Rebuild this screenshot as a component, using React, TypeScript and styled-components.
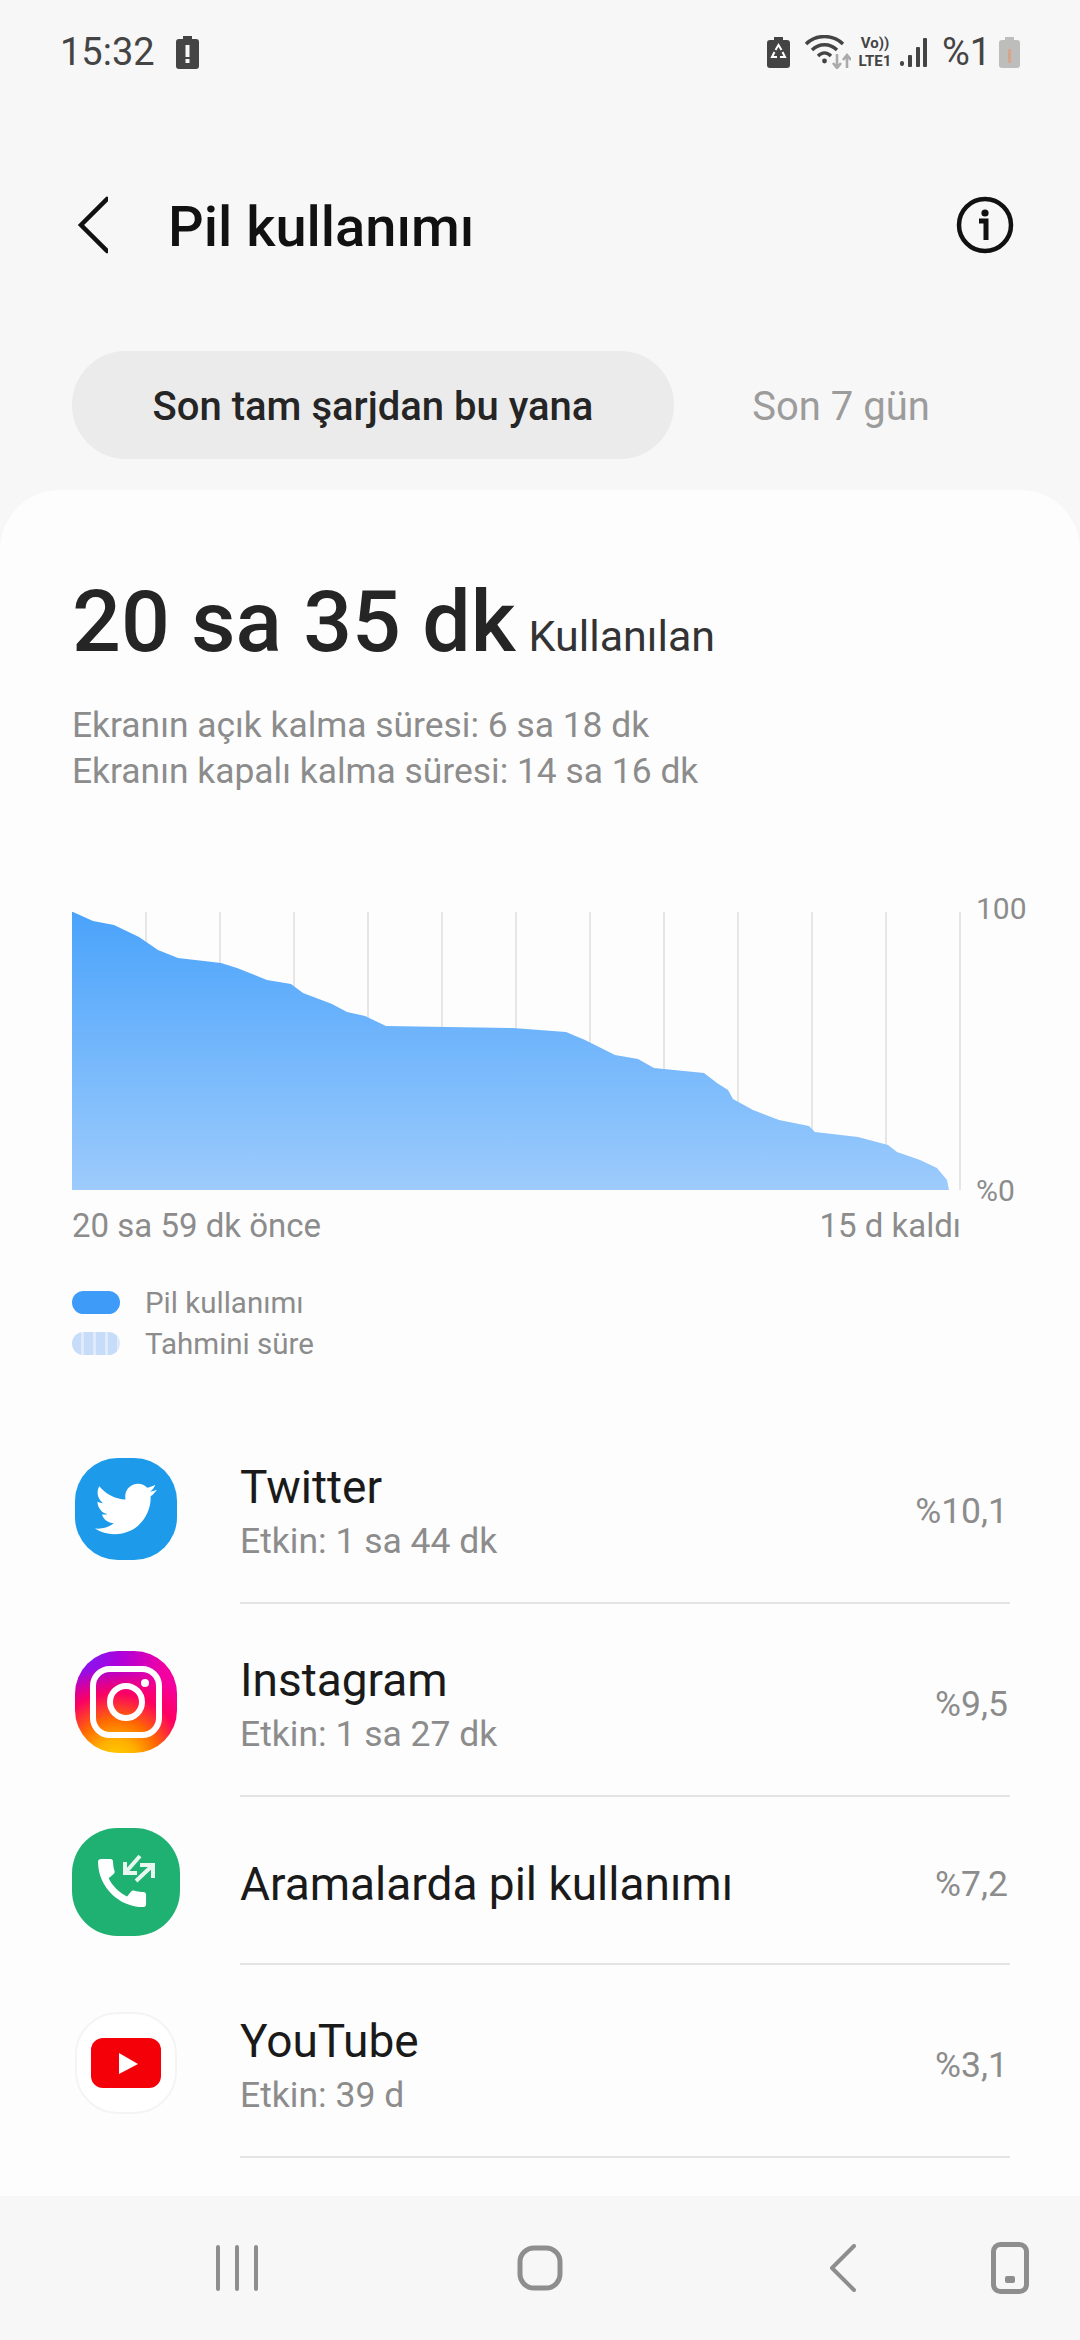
import React from 'react';
import styled, { createGlobalStyle } from 'styled-components';
import { FaTwitter } from 'react-icons/fa';

const GlobalStyle = createGlobalStyle`
	html, body {
		margin: 0;
		padding: 0;
		background: #f7f7f7;
	}
	* {
		box-sizing: border-box;
	}
`;

const curve: [number, number][] = [
	[1, 0], [21, 9], [42, 13], [67, 25], [86, 38], [106, 46], [149, 51], [165, 56], [195, 68],
	[219, 72], [231, 81], [260, 92], [275, 100], [293, 104], [314, 114], [441, 116], [494, 120],
	[513, 128], [543, 143], [566, 147], [582, 156], [632, 161], [645, 171], [656, 178], [661, 187],
	[681, 198], [707, 208], [737, 214], [743, 220], [786, 225], [816, 233], [825, 240], [848, 248],
	[865, 256], [875, 268], [877, 278],
];
const gridLines = [74, 148, 222, 296, 370, 444, 518, 592, 666, 740, 814, 888];
const chartPath = `M0 278 L0 0 ${curve.map(([x, y]) => `L${x} ${y}`).join(' ')} Z`;

const apps = [
	{ name: 'Twitter', active: 'Etkin: 1 sa 44 dk', share: '%10,1', height: 193, icon: <TwitterIcon /> },
	{ name: 'Instagram', active: 'Etkin: 1 sa 27 dk', share: '%9,5', height: 193, icon: <InstagramIcon /> },
	{ name: 'Aramalarda pil kullanımı', share: '%7,2', height: 168, icon: <CallIcon /> },
	{ name: 'YouTube', active: 'Etkin: 39 d', share: '%3,1', height: 193, icon: <YoutubeIcon /> },
];

function TwitterIcon() {
	return (
		<TwitterTile>
			<FaTwitter size={62} color='#fff' />
		</TwitterTile>
	);
}

function InstagramIcon() {
	return (
		<InstagramTile>
			<svg width='102' height='102' viewBox='0 0 102 102' fill='none' stroke='#fff' strokeWidth='6'>
				<rect x='18' y='18' width='66' height='66' rx='17' />
				<circle cx='51' cy='51' r='16' />
				<circle cx='70' cy='32' r='4' fill='#fff' stroke='none' />
			</svg>
		</InstagramTile>
	);
}

function CallIcon() {
	return (
		<CallTile>
			<svg width='108' height='108' viewBox='0 0 108 108' fill='none'>
				<path
					transform='translate(18 23) scale(2.67)'
					fill='#fff'
					d='M20.01 15.38c-1.23 0-2.42-.2-3.53-.56-.35-.12-.74-.03-1.01.24l-1.57 1.97c-2.83-1.35-5.48-3.9-6.89-6.83l1.95-1.66c.27-.28.35-.67.24-1.02-.37-1.11-.56-2.3-.56-3.53 0-.54-.45-.99-.99-.99H4.19C3.65 3 3 3.24 3 3.99 3 13.28 10.73 21 20.01 21c.71 0 .99-.63.99-1.18v-3.45c0-.54-.45-.99-.99-.99z'
				/>
				<path
					d='M68 28 L53 45 M53 34 V45 H65 M64 53 L81 37 M68 37 H81 V50'
					stroke='#fff'
					strokeWidth='4'
					opacity='0.9'
				/>
			</svg>
		</CallTile>
	);
}

function YoutubeIcon() {
	return (
		<YoutubeTile>
			<svg width='70' height='50' viewBox='0 0 70 50'>
				<rect width='70' height='50' rx='12' fill='#f40009' />
				<path d='M28 15 L47 26 L28 36 Z' fill='#fff' />
			</svg>
		</YoutubeTile>
	);
}

function StatusIcons() {
	return (
		<StatusRight>
			<svg width='23' height='31' viewBox='0 0 23 31'>
				<path d='M7 0h9v3h4a3 3 0 0 1 3 3v22a3 3 0 0 1-3 3H3a3 3 0 0 1-3-3V6a3 3 0 0 1 3-3h4z' fill='#444' />
				<path d='M8.5 13 L11.5 8 L14.5 13 M15.5 15 L18 20 H13 M10 20 H5 L7.5 15' stroke='#fff' strokeWidth='2' fill='none' />
			</svg>
			<WifiBox>
				<svg width='46' height='34' viewBox='0 0 46 34' fill='none'>
					<path d='M1 9 C11 -1 28 -1 38 9' stroke='#444' strokeWidth='3.4' />
					<path d='M7 15 C14 8 25 8 32 15' stroke='#444' strokeWidth='3.4' />
					<path d='M13 21 C17 17 22 17 26 21' stroke='#444' strokeWidth='3.4' />
					<circle cx='19.5' cy='26' r='2.4' fill='#444' />
					<path d='M32 19 V32 M28 28 L32 33 L36 28 M42 33 V21 M38 25 L42 20 L46 25' stroke='#aaa' strokeWidth='2.6' />
				</svg>
			</WifiBox>
			<NetworkLabel>
				<span>Vo))</span>
				<span>LTE1</span>
			</NetworkLabel>
			<SignalBars width='27' height='29' viewBox='0 0 27 29' fill='#444'>
				<rect x='0' y='23' width='4' height='5' rx='2' />
				<rect x='8' y='17' width='4' height='12' rx='1' />
				<rect x='16' y='9' width='4' height='20' rx='1' />
				<rect x='23' y='0' width='4' height='29' rx='1' />
			</SignalBars>
			<BatteryPercent>%1</BatteryPercent>
			<svg width='21' height='31' viewBox='0 0 21 31'>
				<path d='M6 0h9v3h3a3 3 0 0 1 3 3v22a3 3 0 0 1-3 3H3a3 3 0 0 1-3-3V6a3 3 0 0 1 3-3h3z' fill='#bdbdbb' />
				<rect x='9' y='12' width='3' height='14' fill='#d9a48f' />
			</svg>
		</StatusRight>
	);
}

export default function App() {
	return (
		<Page>
			<GlobalStyle />
			<StatusBar>
				<StatusLeft>
					<Clock>15:32</Clock>
					<svg width='23' height='33' viewBox='0 0 23 33'>
						<path d='M7 0h9v3h4a3 3 0 0 1 3 3v24a3 3 0 0 1-3 3H3a3 3 0 0 1-3-3V6a3 3 0 0 1 3-3h4z' fill='#444' />
						<rect x='9.5' y='9' width='4' height='12' fill='#f7f7f7' />
						<rect x='9.5' y='23' width='4' height='4' fill='#f7f7f7' />
					</svg>
				</StatusLeft>
				<StatusIcons />
			</StatusBar>

			<Header>
				<svg width='36' height='58' viewBox='0 0 36 58' fill='none' stroke='#111' strokeWidth='4.5' strokeLinecap='round'>
					<path d='M35 3 L9 29 L35 55' />
				</svg>
				<Title>Pil kullanımı</Title>
				<svg width='58' height='58' viewBox='0 0 58 58' fill='none'>
					<circle cx='29' cy='29' r='26' stroke='#111' strokeWidth='4.5' />
					<circle cx='29' cy='17' r='3.6' fill='#111' />
					<path d='M23 25 H30 V44' stroke='#111' strokeWidth='5' />
				</svg>
			</Header>

			<Tabs>
				<ActiveTab>Son tam şarjdan bu yana</ActiveTab>
				<IdleTab>Son 7 gün</IdleTab>
			</Tabs>

			<Card>
				<TotalRow>
					<TotalValue>20 sa 35 dk</TotalValue>
					<TotalLabel>Kullanılan</TotalLabel>
				</TotalRow>
				<ScreenTimes>
					<div>Ekranın açık kalma süresi: 6 sa 18 dk</div>
					<div>Ekranın kapalı kalma süresi: 14 sa 16 dk</div>
				</ScreenTimes>

				<ChartRow>
					<svg width='890' height='278' viewBox='0 0 890 278'>
						<defs>
							<linearGradient id='batteryFill' x1='0' y1='0' x2='0' y2='1'>
								<stop offset='0' stopColor='#4aa3fb' />
								<stop offset='1' stopColor='#9dcbfc' />
							</linearGradient>
						</defs>
						{gridLines.map(x => (
							<line key={x} x1={x} x2={x} y1='0' y2='278' stroke='#e6e6e6' strokeWidth='2' />
						))}
						<path d={chartPath} fill='url(#batteryFill)' />
					</svg>
					<Axis>
						<span>100</span>
						<span>%0</span>
					</Axis>
				</ChartRow>
				<TimeRange>
					<span>20 sa 59 dk önce</span>
					<span>15 d kaldı</span>
				</TimeRange>

				<Legend>
					<LegendItem>
						<Swatch />
						Pil kullanımı
					</LegendItem>
					<LegendItem>
						<Swatch $estimated />
						Tahmini süre
					</LegendItem>
				</Legend>

				<AppList>
					{apps.map(app => (
						<AppRow key={app.name}>
							<IconCell>{app.icon}</IconCell>
							<AppBody $height={app.height}>
								<div>
									<AppName>{app.name}</AppName>
									{app.active && <AppActive>{app.active}</AppActive>}
								</div>
								<AppShare>{app.share}</AppShare>
							</AppBody>
						</AppRow>
					))}
				</AppList>
			</Card>

			<NavBar>
				<svg width='44' height='46' viewBox='0 0 44 46' stroke='#8e8e8e' strokeWidth='4' strokeLinecap='round'>
					<path d='M3 2 V44 M22 2 V44 M41 2 V44' />
				</svg>
				<svg width='46' height='46' viewBox='0 0 46 46' fill='none' stroke='#8e8e8e' strokeWidth='5'>
					<rect x='3' y='3' width='40' height='40' rx='14' />
				</svg>
				<svg width='26' height='48' viewBox='0 0 26 48' fill='none' stroke='#8e8e8e' strokeWidth='4' strokeLinecap='round' strokeLinejoin='round'>
					<path d='M24 2 L2 24 L24 46' />
				</svg>
				<PhoneButton>
					<svg width='38' height='52' viewBox='0 0 38 52' fill='none'>
						<rect x='2.5' y='2.5' width='33' height='47' rx='7' stroke='#8e8e8e' strokeWidth='5' />
						<rect x='14' y='34' width='10' height='7' rx='2' fill='#8e8e8e' />
					</svg>
				</PhoneButton>
			</NavBar>
		</Page>
	);
}

const Page = styled.div`
	display: flex;
	flex-direction: column;
	width: 1080px;
	height: 2340px;
	overflow: hidden;
	background: #f7f7f7;
	font-family: Roboto, 'Noto Sans', sans-serif;
`;

const StatusBar = styled.div`
	display: flex;
	justify-content: space-between;
	align-items: center;
	flex: 0 0 104px;
	padding: 0 60px;
	color: #444;
`;

const StatusLeft = styled.div`
	display: flex;
	align-items: center;
	gap: 21px;
`;

const Clock = styled.span`
	font-size: 38px;
`;

const StatusRight = styled.div`
	display: flex;
	align-items: center;
	gap: 13px;
`;

const WifiBox = styled.div`
	display: flex;
	margin: 0 -9px 0 2px;
`;

const NetworkLabel = styled.div`
	display: flex;
	flex-direction: column;
	align-items: center;
	width: 40px;
	font-size: 15px;
	font-weight: 700;
	line-height: 18px;
`;

const SignalBars = styled.svg`
	margin-left: -8px;
`;

const BatteryPercent = styled.span`
	font-size: 38px;
	width: 44px;
	margin-left: 2px;
`;

const Header = styled.header`
	display: flex;
	align-items: center;
	flex: 0 0 242px;
	padding: 0 66px 0 72px;
`;

const Title = styled.h1`
	flex: 1;
	margin: 0 0 0 60px;
	padding-top: 4px;
	font-size: 56px;
	font-weight: 500;
	color: #111;
`;

const Tabs = styled.div`
	display: flex;
	align-items: center;
	flex: 0 0 144px;
	padding: 5px 72px 31px;
`;

const ActiveTab = styled.div`
	display: flex;
	align-items: center;
	justify-content: center;
	width: 602px;
	height: 108px;
	padding-top: 2px;
	border-radius: 54px;
	background: #ebebeb;
	font-size: 40px;
	font-weight: 500;
	color: #252525;
`;

const IdleTab = styled.div`
	flex: 1;
	padding-top: 2px;
	text-align: center;
	font-size: 40px;
	color: #9c9c9c;
`;

const Card = styled.main`
	flex: 1;
	min-height: 0;
	overflow: hidden;
	padding-top: 86px;
	border-radius: 60px 60px 0 0;
	background: #fdfdfd;
`;

const TotalRow = styled.div`
	display: flex;
	align-items: baseline;
	gap: 13px;
	padding: 0 72px;
`;

const TotalValue = styled.div`
	font-size: 86px;
	font-weight: 500;
	line-height: 92px;
	color: #252525;
`;

const TotalLabel = styled.div`
	font-size: 43px;
	color: #333;
`;

const ScreenTimes = styled.div`
	margin-top: 34px;
	padding: 0 72px;
	font-size: 35.4px;
	line-height: 46px;
	color: #8c8c8c;
`;

const ChartRow = styled.div`
	display: flex;
	margin-top: 118px;
	padding-left: 72px;
`;

const Axis = styled.div`
	display: flex;
	flex-direction: column;
	justify-content: space-between;
	margin: -23px 0 -21px 14px;
	font-size: 30px;
	line-height: 40px;
	color: #8c8c8c;
`;

const TimeRange = styled.div`
	display: flex;
	justify-content: space-between;
	width: 961px;
	margin-top: 16px;
	padding-left: 72px;
	font-size: 33px;
	line-height: 40px;
	color: #8c8c8c;
`;

const Legend = styled.div`
	margin-top: 36px;
	padding-left: 72px;
`;

const LegendItem = styled.div`
	display: flex;
	align-items: center;
	gap: 25px;
	height: 41px;
	font-size: 29.5px;
	color: #8c8c8c;
`;

const Swatch = styled.span<{ $estimated?: boolean }>`
	width: 48px;
	height: 23px;
	border-radius: 12px;
	background: ${p =>
		p.$estimated
			? 'repeating-linear-gradient(90deg, #c6dcf8 0 9px, #dfebfb 9px 12px)'
			: '#3f9bf8'};
`;

const AppList = styled.section`
	margin-top: 47px;
`;

const AppRow = styled.div`
	display: flex;
	align-items: center;
	padding: 0 70px 0 72px;
`;

const IconCell = styled.div`
	display: flex;
	flex: 0 0 168px;
	align-items: center;
	padding-top: 2px;
`;

const Tile = styled.div`
	display: flex;
	align-items: center;
	justify-content: center;
	width: 102px;
	height: 102px;
	margin-left: 3px;
	border-radius: 42%;
`;

const TwitterTile = styled(Tile)`
	background: #1d9bea;
`;

const InstagramTile = styled(Tile)`
	background:
		radial-gradient(circle at 40% 110%, #ffd600 0, #ffb000 18%, #ff6a00 34%, rgba(255, 0, 90, 0.9) 55%, rgba(255, 0, 105, 0) 75%),
		radial-gradient(circle at 10% 0%, #7a1cf5 0, rgba(160, 0, 230, 0.8) 28%, rgba(160, 0, 230, 0) 60%),
		#f500a0;
`;

const CallTile = styled(Tile)`
	width: 108px;
	height: 108px;
	margin-left: 0;
	background: #1fb172;
`;

const YoutubeTile = styled(Tile)`
	background: #fff;
	border: 2px solid #f4f4f4;
`;

const AppBody = styled.div<{ $height: number }>`
	display: flex;
	flex: 1;
	align-items: center;
	justify-content: space-between;
	height: ${p => p.$height}px;
	padding: 8px 2px 0 0;
	border-bottom: 2px solid #e4e4e4;
`;

const AppName = styled.div`
	font-size: 46px;
	line-height: 60px;
	color: #1a1a1a;
`;

const AppActive = styled.div`
	font-size: 35.5px;
	line-height: 48px;
	color: #8c8c8c;
`;

const AppShare = styled.div`
	font-size: 35.5px;
	color: #8c8c8c;
`;

const NavBar = styled.nav`
	display: grid;
	grid-template-columns: 303px 303px 303px auto;
	justify-content: start;
	justify-items: center;
	align-items: center;
	flex: 0 0 144px;
	padding: 0 0 0 85px;
	background: #f7f7f7;
`;

const PhoneButton = styled.div`
	display: flex;
	margin-left: -3px;
`;
